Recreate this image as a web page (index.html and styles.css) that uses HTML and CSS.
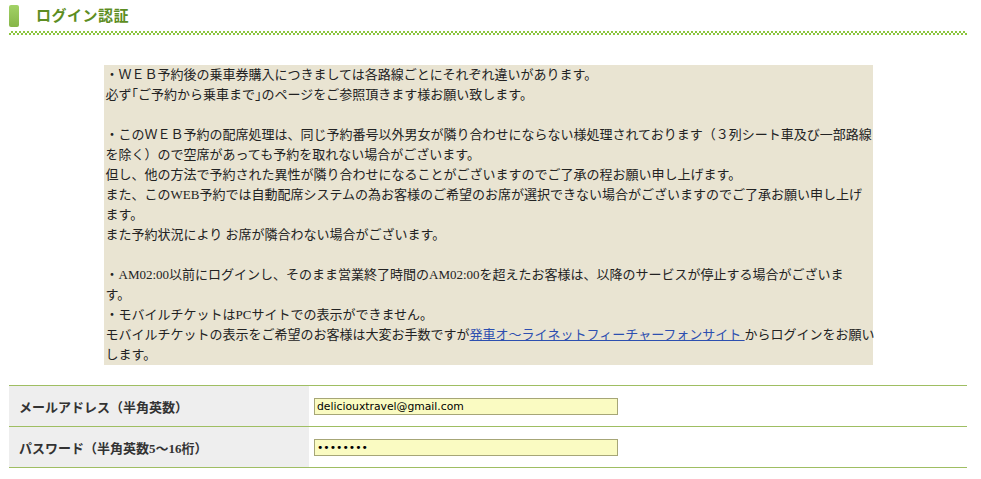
FILE: index.html
```html
<!DOCTYPE html>
<html lang="ja">
<head>
<meta charset="utf-8">
<title>ログイン認証</title>
<link rel="stylesheet" href="styles.css">
</head>
<body>
<div class="page">
  <div class="heading">
    <span class="heading-bar"></span>
    <h1 class="heading-title">ログイン認証</h1>
  </div>
  <div class="heading-line"></div>

  <div class="notice">
    <p>・ＷＥＢ予約後の乗車券購入につきましては各路線ごとにそれぞれ違いがあります。<br>必ず｢ご予約から乗車まで｣のページをご参照頂きます様お願い致します。</p>
    <p>・このＷＥＢ予約の配席処理は、同じ予約番号以外男女が隣り合わせにならない様処理されております（３列シート車及び一部路線<br>を除く）ので空席があっても予約を取れない場合がございます。<br>但し、他の方法で予約された異性が隣り合わせになることがございますのでご了承の程お願い申し上げます。<br>また、このWEB予約では自動配席システムの為お客様のご希望のお席が選択できない場合がございますのでご了承お願い申し上げ<br>ます。<br>また予約状況により お席が隣合わない場合がございます。</p>
    <p>・AM02:00以前にログインし、そのまま営業終了時間のAM02:00を超えたお客様は、以降のサービスが停止する場合がございま<br>す。<br>・モバイルチケットはPCサイトでの表示ができません。<br>モバイルチケットの表示をご希望のお客様は大変お手数ですが<a class="notice-link" href="#">発車オ～ライネットフィーチャーフォンサイト&nbsp;</a>からログインをお願い<br>します。</p>
  </div>

  <table class="login-table">
    <tr>
      <th class="login-label">メールアドレス（半角英数）</th>
      <td class="login-field"><input class="login-input" type="text" value="deliciouxtravel@gmail.com"></td>
    </tr>
    <tr>
      <th class="login-label">パスワード（半角英数5～16桁）</th>
      <td class="login-field"><input class="login-input" type="password" value="12345678"></td>
    </tr>
  </table>
</div>
</body>
</html>
```

FILE: styles.css
```css
html, body {
  margin: 0;
  padding: 0;
  background: #ffffff;
}

body {
  font-family: "Liberation Serif", "Noto Sans CJK JP", serif;
  color: #222222;
}

.page {
  width: 958px;
  margin-left: 9px;
  padding-top: 5px;
}

.heading {
  display: flex;
  align-items: center;
  height: 22px;
}

.heading-bar {
  width: 10px;
  height: 22px;
  border-radius: 2px;
  background: linear-gradient(#a2d266, #86b548);
}

.heading-title {
  margin: 0 0 0 17px;
  font-size: 15px;
  font-weight: bold;
  color: #5d8d22;
  line-height: 22px;
  letter-spacing: 0.5px;
}

.heading-line {
  margin-top: 4px;
  height: 4px;
  background: conic-gradient(#8cc63f 25%, #ffffff 0 50%, #8cc63f 0 75%, #ffffff 0) 0 0 / 4px 4px;
}

.notice {
  width: 767px;
  margin: 30px auto 0;
  padding: 0 0 0 2px;
  background: #e9e4d2;
  font-size: 13px;
  line-height: 20px;
  color: #222222;
}

.notice p {
  margin: 0;
  white-space: nowrap;
}

.notice p + p {
  margin-top: 20px;
}

.notice-link {
  color: #2d4fb0;
  text-decoration: underline;
}

.login-table {
  width: 100%;
  margin-top: 20px;
  border-collapse: collapse;
}

.login-table tr {
  border-top: 1px solid #9fbe62;
  border-bottom: 1px solid #9fbe62;
}

.login-label {
  width: 290px;
  height: 40px;
  padding: 0 0 0 10px;
  background: #eeeeee;
  text-align: left;
  font-size: 13px;
  font-weight: bold;
  color: #333333;
}

.login-field {
  height: 40px;
  padding: 0 0 0 5px;
  vertical-align: middle;
}

.login-input {
  display: block;
  box-sizing: border-box;
  width: 304px;
  height: 17px;
  margin: 0;
  padding: 0 2px;
  border: 1px solid #a6a677;
  background: #fafbc2;
  font-family: "DejaVu Sans", sans-serif;
  font-size: 10.8px;
  color: #000000;
  outline: none;
}
```
